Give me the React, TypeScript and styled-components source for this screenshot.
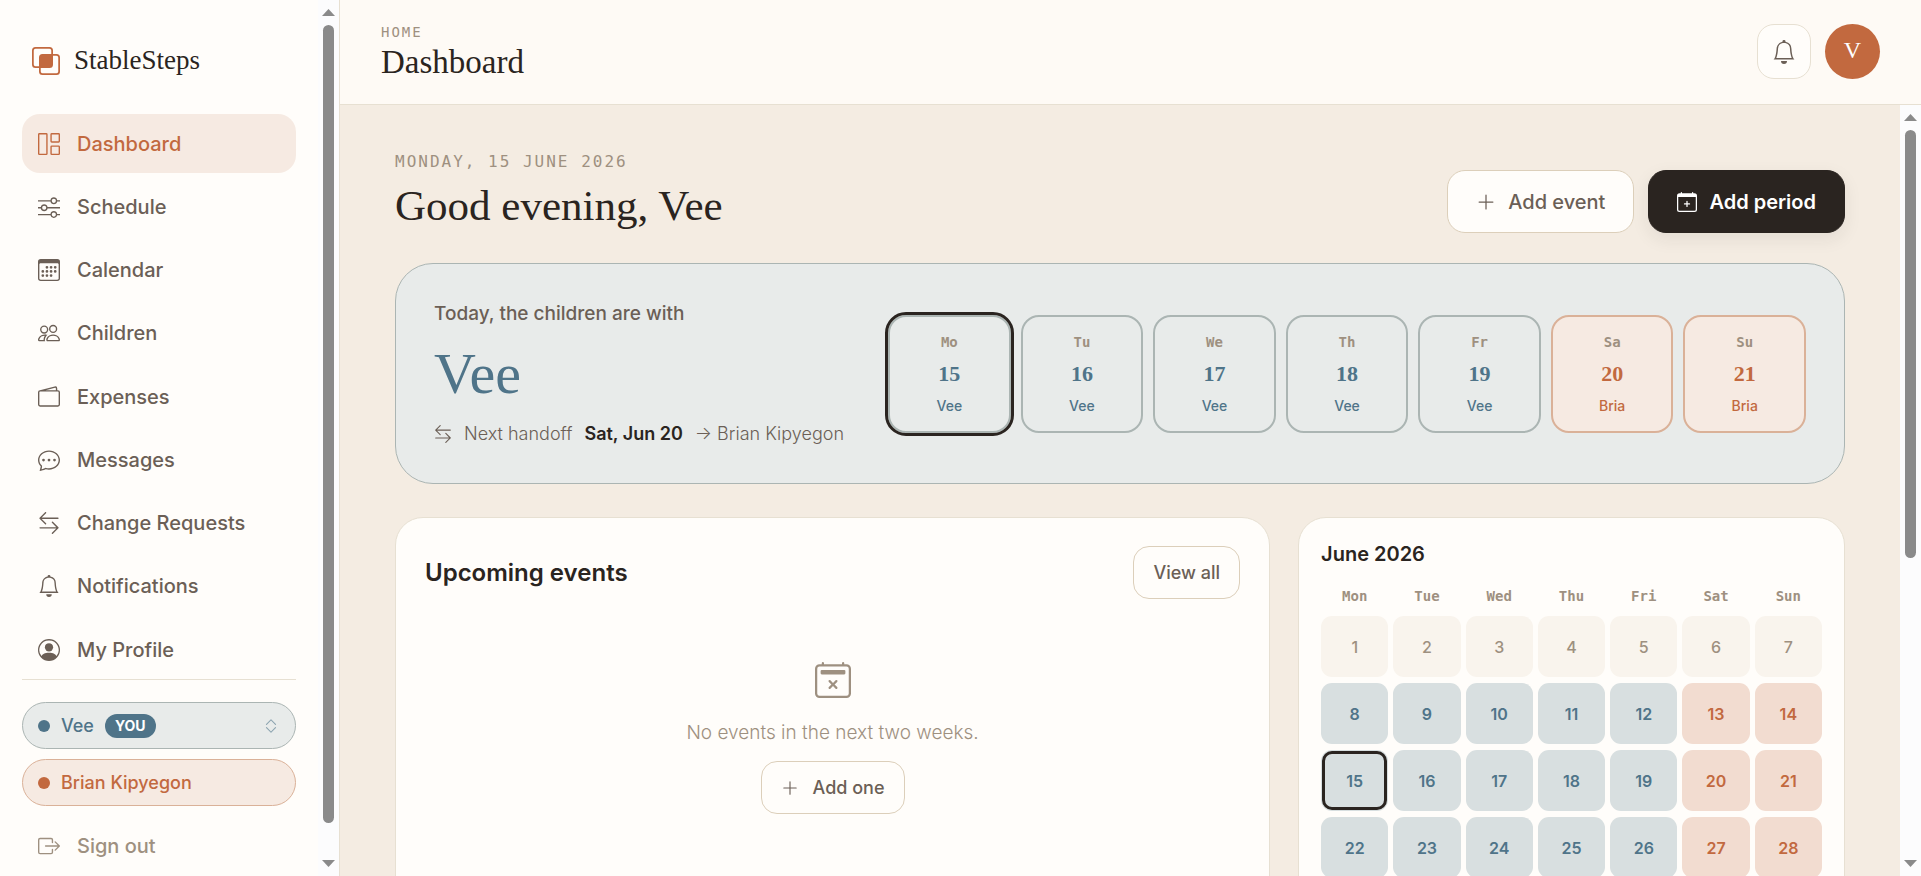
import React from "react";
import styled, { createGlobalStyle, css } from "styled-components";
import {
  BsArrowLeftRight,
  BsBell,
  BsBoxArrowRight,
  BsCalendar2X,
  BsCalendar3,
  BsCalendarPlus,
  BsChatDots,
  BsChevronExpand,
  BsGrid1X2,
  BsIntersect,
  BsPeople,
  BsPersonCircle,
  BsPlusLg,
  BsSliders,
  BsWallet2,
} from "react-icons/bs";

const color = {
  ink: "#2a2420",
  text: "#6b5f56",
  muted: "#9e9080",
  paper: "#fffdfa",
  bar: "#fefaf5",
  sand: "#f4ece2",
  line: "#e7e0d2",
  edge: "#dccfba",
  blue: "#4f7489",
  blueTint: "#e8ebea",
  blueCell: "#d8dfe0",
  blueEdge: "#abb5b3",
  clay: "#c2693f",
  clayTint: "#f6eae2",
  clayCell: "#f2dcd0",
  clayEdge: "#dab198",
  idle: "#f9f4ed",
};

const sans = `Inter, "Liberation Sans", sans-serif`;
const serif = `"Liberation Serif", serif`;
const mono = `"DejaVu Sans Mono", monospace`;

type Tone = "blue" | "clay";
const tones = {
  blue: { fg: color.blue, tint: color.blueTint, cell: color.blueCell, edge: color.blueEdge },
  clay: { fg: color.clay, tint: color.clayTint, cell: color.clayCell, edge: color.clayEdge },
};

const GlobalStyle = createGlobalStyle`
  *, *::before, *::after { box-sizing: border-box; }
  body { margin: 0; background: ${color.sand}; color: ${color.ink}; font-family: ${sans}; font-size: 18px; }
  h1, h2, p, ul { margin: 0; padding: 0; }
  ul { list-style: none; }
  button { font-family: inherit; cursor: pointer; }
  svg { flex: none; }
`;

const Shell = styled.div`
  display: flex;
  height: 100vh;
  overflow: hidden;
`;

/* Sidebar */

const Sidebar = styled.aside`
  display: flex;
  flex: none;
  width: 340px;
  background: ${color.paper};
  border-right: 1px solid ${color.line};
`;

const SidebarBody = styled.div`
  flex: 1;
  display: flex;
  flex-direction: column;
  padding: 0 22px;
  overflow: hidden;
`;

const Brand = styled.a`
  display: flex;
  align-items: center;
  gap: 14px;
  flex: none;
  height: 114px;
  padding: 8px 10px 0;
  color: ${color.clay};
  text-decoration: none;
`;

const BrandName = styled.span`
  padding-bottom: 2px;
  font: 400 27px/36px ${serif};
  color: ${color.ink};
`;

const NavList = styled.ul`
  flex: 1;
  display: flex;
  flex-direction: column;
  justify-content: space-between;
`;

const rowStyle = css`
  display: flex;
  align-items: center;
  gap: 17px;
  padding: 0 16px;
  border: 0;
  border-radius: 18px;
  font-size: 20px;
  font-weight: 500;
  line-height: 28px;
  white-space: nowrap;
`;

const NavLink = styled.a<{ $active?: boolean }>`
  ${rowStyle}
  height: 59px;
  text-decoration: none;
  color: ${(p) => (p.$active ? color.clay : color.text)};
  background: ${(p) => (p.$active ? color.clayTint : "transparent")};
`;

const SidebarFoot = styled.div`
  display: flex;
  flex-direction: column;
  gap: 10px;
  padding-top: 22px;
  border-top: 1px solid ${color.line};
`;

const PersonPill = styled.button<{ $tone: Tone }>`
  display: flex;
  align-items: center;
  gap: 11px;
  height: 47px;
  padding: 0 15px;
  border: 1px solid ${(p) => tones[p.$tone].edge};
  border-radius: 24px;
  background: ${(p) => tones[p.$tone].tint};
  color: ${(p) => tones[p.$tone].fg};
  font-size: 18px;
  font-weight: 500;
  text-align: left;

  svg {
    margin-left: auto;
    opacity: 0.6;
  }
`;

const Dot = styled.span`
  width: 12px;
  height: 12px;
  border-radius: 50%;
  background: currentColor;
`;

const Badge = styled.span`
  padding: 0 10px;
  border-radius: 12px;
  background: ${color.blue};
  color: #fff;
  font-size: 14px;
  font-weight: 700;
  line-height: 24px;
`;

const SignOut = styled.button`
  ${rowStyle}
  height: 60px;
  background: none;
  color: ${color.muted};
`;

/* Scroll rails */

const ScrollRail = styled.div`
  display: flex;
  flex: none;
  flex-direction: column;
  align-items: center;
  gap: 9px;
  width: 21px;
  padding: 9px 0;
  background: #fcfcfd;
  color: #8a8a8a;
`;

const Track = styled.div`
  flex: 1;
  width: 11px;
`;

const Thumb = styled.div<{ $share: number }>`
  height: ${(p) => p.$share * 100}%;
  border-radius: 6px;
  background: currentColor;
`;

const Rail = ({ share }: { share: number }) => (
  <ScrollRail aria-hidden="true">
    <svg width="13" height="7" viewBox="0 0 13 7"><path d="M6.5 0 13 7H0z" fill="currentColor" /></svg>
    <Track><Thumb $share={share} /></Track>
    <svg width="13" height="7" viewBox="0 0 13 7"><path d="M6.5 7 0 0h13z" fill="currentColor" /></svg>
  </ScrollRail>
);

/* Top bar */

const Workspace = styled.div`
  flex: 1;
  min-width: 0;
  display: flex;
  flex-direction: column;
`;

const TopBar = styled.header`
  display: flex;
  align-items: center;
  justify-content: space-between;
  flex: none;
  height: 105px;
  padding: 0 41px 1px;
  background: ${color.bar};
  border-bottom: 1px solid ${color.line};
`;

const Crumb = styled.p`
  font: 400 14px/20px ${mono};
  letter-spacing: 2px;
  text-transform: uppercase;
  color: ${color.muted};
`;

const PageTitle = styled.p`
  font: 400 33px/40px ${serif};
  color: ${color.ink};
`;

const TopActions = styled.div`
  display: flex;
  gap: 14px;
`;

const IconButton = styled.button`
  display: grid;
  place-items: center;
  width: 54px;
  height: 55px;
  padding: 0;
  border: 1px solid ${color.line};
  border-radius: 17px;
  background: ${color.paper};
  color: ${color.text};
`;

const Avatar = styled.button`
  width: 55px;
  height: 55px;
  padding: 0 0 4px;
  border: 0;
  border-radius: 50%;
  background: ${color.clay};
  color: #fff;
  font: 400 24px/30px ${serif};
`;

/* Content */

const ScrollArea = styled.div`
  flex: 1;
  min-height: 0;
  display: flex;
`;

const Content = styled.main`
  flex: 1;
  min-width: 0;
  overflow: auto;
  scrollbar-width: none;
  padding: 46px 55px;
`;

const Intro = styled.div`
  display: flex;
  align-items: flex-end;
  justify-content: space-between;
  margin-bottom: 26px;
`;

const Eyebrow = styled.p`
  margin-bottom: 2px;
  font: 400 16px/22px ${mono};
  letter-spacing: 2px;
  text-transform: uppercase;
  color: ${color.muted};
`;

const Greeting = styled.h1`
  font: 400 43px/62px ${serif};
`;

const Actions = styled.div`
  display: flex;
  gap: 14px;
  padding-bottom: 4px;
`;

const Button = styled.button<{ $dark?: boolean; $small?: boolean }>`
  display: flex;
  align-items: center;
  justify-content: center;
  gap: ${(p) => (p.$small ? 14 : 12)}px;
  height: ${(p) => (p.$small ? 53 : 63)}px;
  padding: 0 ${(p) => (p.$small ? 19 : 28)}px;
  border: 1px solid ${(p) => (p.$dark ? color.ink : color.edge)};
  border-radius: ${(p) => (p.$small ? 16 : 18)}px;
  background: ${(p) => (p.$dark ? color.ink : color.paper)};
  color: ${(p) => (p.$dark ? "#fff" : color.text)};
  box-shadow: ${(p) => (p.$dark ? "0 6px 18px rgba(42, 36, 32, 0.08)" : "none")};
  font-size: ${(p) => (p.$small ? 18 : 20)}px;
  font-weight: ${(p) => (p.$dark ? 600 : 500)};
  white-space: nowrap;
`;

const Hero = styled.section`
  display: grid;
  grid-template-columns: minmax(0, 9fr) minmax(0, 20fr);
  align-items: center;
  gap: 41px;
  margin-bottom: 33px;
  padding: 35px 38px;
  border: 1px solid ${color.blueEdge};
  border-radius: 38px;
  background: ${color.blueTint};
`;

const HeroLabel = styled.p`
  font-size: 19px;
  font-weight: 500;
  line-height: 30px;
  color: ${color.text};
`;

const HeroName = styled.p`
  margin: 6px 0 8px;
  font: 400 58px/77px ${serif};
  color: ${color.blue};
`;

const Handoff = styled.p`
  display: flex;
  align-items: center;
  gap: 12px;
  font-weight: 300;
  line-height: 28px;
  white-space: nowrap;
  color: ${color.text};

  strong {
    font-weight: 600;
    color: ${color.ink};
  }
`;

const Week = styled.ul`
  display: grid;
  grid-template-columns: repeat(7, minmax(0, 1fr));
  gap: 10px;
`;

const DayChip = styled.li<{ $tone: Tone; $today: boolean }>`
  display: flex;
  flex-direction: column;
  align-items: center;
  gap: 10px;
  padding: 15px 0;
  border: 2px solid ${(p) => tones[p.$tone].edge};
  border-radius: 18px;
  outline: ${(p) => (p.$today ? `3px solid ${color.ink}` : "none")};
  background: ${(p) => tones[p.$tone].tint};
  color: ${(p) => tones[p.$tone].fg};
`;

const ChipDay = styled.span`
  font: 700 14px/20px ${mono};
  color: ${color.muted};
`;

const ChipDate = styled.span`
  font: 700 22px/24px ${serif};
`;

const ChipName = styled.span`
  font-size: 14px;
  font-weight: 500;
  line-height: 20px;
`;

const Columns = styled.div`
  display: grid;
  grid-template-columns: minmax(0, 8fr) minmax(0, 5fr);
  gap: 28px;
`;

const Card = styled.section<{ $compact?: boolean }>`
  padding: ${(p) => (p.$compact ? "22px" : "28px 29px")};
  border: 1px solid ${color.line};
  border-radius: 28px;
  background: ${color.paper};
`;

const CardHead = styled.div`
  display: flex;
  align-items: center;
  justify-content: space-between;
`;

const CardTitle = styled.h2<{ $compact?: boolean }>`
  font-size: ${(p) => (p.$compact ? 20 : 24)}px;
  font-weight: 600;
  line-height: 28px;
`;

const Empty = styled.div`
  display: flex;
  flex-direction: column;
  align-items: center;
  padding: 63px 0;
  color: ${color.muted};
`;

const EmptyText = styled.p`
  margin: 21px 0 14px;
  font-size: 19px;
  font-weight: 300;
  line-height: 28px;
`;

const Month = styled.table`
  width: calc(100% + 10px);
  margin: 8px -5px 0;
  table-layout: fixed;
  border-collapse: separate;
  border-spacing: 5px 6px;

  th {
    height: 28px;
    padding: 0;
    font: 700 14px/20px ${mono};
    color: ${color.muted};
  }
`;

const MonthDay = styled.td<{ $tone?: Tone; $today: boolean }>`
  height: 61px;
  padding: 0;
  border-radius: 11px;
  text-align: center;
  font-size: 16px;
  font-weight: ${(p) => (p.$tone ? 600 : 500)};
  background: ${(p) => (p.$tone ? tones[p.$tone].cell : color.idle)};
  color: ${(p) => (p.$tone ? tones[p.$tone].fg : color.muted)};
  outline: ${(p) => (p.$today ? `3px solid ${color.ink}` : "none")};
  outline-offset: -4px;
`;

const nav = [
  { label: "Dashboard", Icon: BsGrid1X2 },
  { label: "Schedule", Icon: BsSliders },
  { label: "Calendar", Icon: BsCalendar3 },
  { label: "Children", Icon: BsPeople },
  { label: "Expenses", Icon: BsWallet2 },
  { label: "Messages", Icon: BsChatDots },
  { label: "Change Requests", Icon: BsArrowLeftRight },
  { label: "Notifications", Icon: BsBell },
  { label: "My Profile", Icon: BsPersonCircle },
];

const week: { day: string; date: number; name: string; tone: Tone }[] = [
  { day: "Mo", date: 15, name: "Vee", tone: "blue" },
  { day: "Tu", date: 16, name: "Vee", tone: "blue" },
  { day: "We", date: 17, name: "Vee", tone: "blue" },
  { day: "Th", date: 18, name: "Vee", tone: "blue" },
  { day: "Fr", date: 19, name: "Vee", tone: "blue" },
  { day: "Sa", date: 20, name: "Bria", tone: "clay" },
  { day: "Su", date: 21, name: "Bria", tone: "clay" },
];

const TODAY = 15;
const weekdays = ["Mon", "Tue", "Wed", "Thu", "Fri", "Sat", "Sun"];
const monthRows = [1, 8, 15, 22].map((start) => weekdays.map((_, i) => start + i));

const toneOf = (date: number, column: number): Tone | undefined =>
  date < 8 ? undefined : column > 4 ? "clay" : "blue";

export default function App() {
  return (
    <>
      <GlobalStyle />
      <Shell>
        <Sidebar>
          <SidebarBody>
            <Brand href="#home">
              <BsIntersect size={28} />
              <BrandName>StableSteps</BrandName>
            </Brand>
            <NavList>
              {nav.map(({ label, Icon }, i) => (
                <li key={label}>
                  <NavLink href="#" $active={i === 0} aria-current={i === 0 ? "page" : undefined}>
                    <Icon size={22} />
                    {label}
                  </NavLink>
                </li>
              ))}
            </NavList>
            <SidebarFoot>
              <PersonPill type="button" $tone="blue">
                <Dot />
                Vee
                <Badge>YOU</Badge>
                <BsChevronExpand size={18} />
              </PersonPill>
              <PersonPill type="button" $tone="clay">
                <Dot />
                Brian Kipyegon
              </PersonPill>
              <SignOut type="button">
                <BsBoxArrowRight size={22} />
                Sign out
              </SignOut>
            </SidebarFoot>
          </SidebarBody>
          <Rail share={0.966} />
        </Sidebar>

        <Workspace>
          <TopBar>
            <div>
              <Crumb>Home</Crumb>
              <PageTitle>Dashboard</PageTitle>
            </div>
            <TopActions>
              <IconButton type="button" aria-label="Notifications">
                <BsBell size={24} />
              </IconButton>
              <Avatar type="button">V</Avatar>
            </TopActions>
          </TopBar>

          <ScrollArea>
            <Content>
              <Intro>
                <div>
                  <Eyebrow>Monday, 15 June 2026</Eyebrow>
                  <Greeting>Good evening, Vee</Greeting>
                </div>
                <Actions>
                  <Button type="button">
                    <BsPlusLg size={20} />
                    Add event
                  </Button>
                  <Button type="button" $dark>
                    <BsCalendarPlus size={20} />
                    Add period
                  </Button>
                </Actions>
              </Intro>

              <Hero>
                <div>
                  <HeroLabel>Today, the children are with</HeroLabel>
                  <HeroName>Vee</HeroName>
                  <Handoff>
                    <BsArrowLeftRight size={18} />
                    <span>Next handoff</span>
                    <strong>Sat, Jun 20</strong>
                    <span>→ Brian Kipyegon</span>
                  </Handoff>
                </div>
                <Week>
                  {week.map((d) => (
                    <DayChip key={d.date} $tone={d.tone} $today={d.date === TODAY}>
                      <ChipDay>{d.day}</ChipDay>
                      <ChipDate>{d.date}</ChipDate>
                      <ChipName>{d.name}</ChipName>
                    </DayChip>
                  ))}
                </Week>
              </Hero>

              <Columns>
                <Card>
                  <CardHead>
                    <CardTitle>Upcoming events</CardTitle>
                    <Button type="button" $small>View all</Button>
                  </CardHead>
                  <Empty>
                    <BsCalendar2X size={36} />
                    <EmptyText>No events in the next two weeks.</EmptyText>
                    <Button type="button" $small>
                      <BsPlusLg size={18} />
                      Add one
                    </Button>
                  </Empty>
                </Card>

                <Card $compact>
                  <CardTitle $compact>June 2026</CardTitle>
                  <Month>
                    <thead>
                      <tr>
                        {weekdays.map((d) => (
                          <th key={d} scope="col">{d}</th>
                        ))}
                      </tr>
                    </thead>
                    <tbody>
                      {monthRows.map((row) => (
                        <tr key={row[0]}>
                          {row.map((date, i) => (
                            <MonthDay key={date} $tone={toneOf(date, i)} $today={date === TODAY}>
                              {date}
                            </MonthDay>
                          ))}
                        </tr>
                      ))}
                    </tbody>
                  </Month>
                </Card>
              </Columns>
            </Content>
            <Rail share={0.594} />
          </ScrollArea>
        </Workspace>
      </Shell>
    </>
  );
}
